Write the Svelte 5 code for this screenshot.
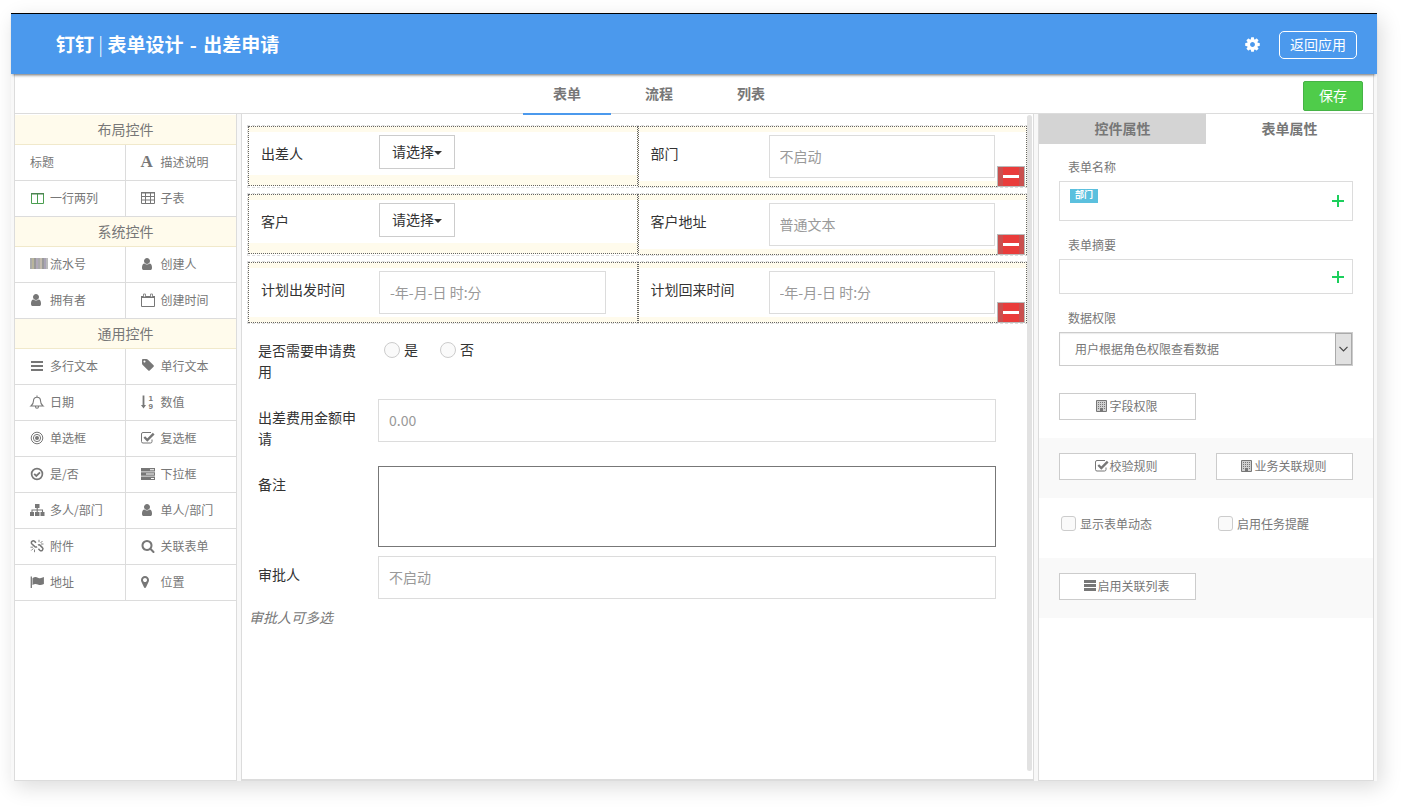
<script>
	// icon shapes are drawn on a 14 x 14 grid, the big ones are scaled down to it
	const big = (d) => `<path transform="scale(.0078125)" d="${d}"/>`;
	const line = (d, w = 1) => `<path d="${d}" fill="none" stroke="currentColor" stroke-width="${w}"/>`;

	const icons = {
		cog: big('M1152 896q0-106-75-181t-181-75-181 75-75 181 75 181 181 75 181-75 75-181zm512-109v222q0 12-8 23t-20 13l-185 28q-19 54-39 91 35 50 107 138 10 12 10 25t-9 23q-27 37-99 108t-94 71q-12 0-26-9l-138-108q-44 23-91 38-16 136-29 186-7 28-36 28h-222q-14 0-24.5-8.5t-11.5-21.5l-28-184q-49-16-90-37l-141 107q-10 9-25 9-14 0-25-11-126-114-165-168-7-10-7-23 0-12 8-23 15-21 51-66.5t54-70.5q-27-50-41-99l-183-27q-13-2-21-12.5t-8-23.5v-222q0-12 8-23t19-13l186-28q14-46 39-92-40-57-107-138-10-12-10-24 0-10 9-23 26-36 98.5-107.5t94.5-71.5q13 0 26 10l138 107q44-23 91-38 16-136 29-186 7-28 36-28h222q14 0 24.5 8.5t11.5 21.5l28 184q49 16 90 37l142-107q9-9 24-9 13 0 25 10 129 119 165 170 7 8 7 22 0 12-8 23-15 21-51 66.5t-54 70.5q26 50 41 98l183 28q13 2 21 12.5t8 23.5z'),
		user: `<g transform="translate(-1 0)">${big('M1536 1399q0 109-62.5 187t-150.5 78h-854q-88 0-150.5-78t-62.5-187q0-85 8.5-160.5t31.5-152 58.5-131 94-89 134.5-34.5q131 128 313 128t313-128q76 0 134.5 34.5t94 89 58.5 131 31.5 152 8.5 160.5zm-256-887q0 159-112.5 271.5t-271.5 112.5-271.5-112.5-112.5-271.5 112.5-271.5 271.5-112.5 271.5 112.5 112.5 271.5z')}</g>`,
		search: big('M1216 832q0-185-131.5-316.5t-316.5-131.5-316.5 131.5-131.5 316.5 131.5 316.5 316.5 131.5 316.5-131.5 131.5-316.5zm512 832q0 52-38 90t-90 38q-54 0-90-38l-343-342q-179 124-399 124-143 0-273.5-55.5t-225-150-150-225-55.5-273.5 55.5-273.5 150-225 225-150 273.5-55.5 273.5 55.5 225 150 150 225 55.5 273.5q0 220-124 399l343 343q37 37 37 90z'),
		marker: `<g transform="translate(-3 0)">${big('M1152 640q0-106-75-181t-181-75-181 75-75 181 75 181 181 75 181-75 75-181zm256 0q0 109-33 179l-364 774q-16 33-47.5 52t-67.5 19-67.5-19-46.5-52l-365-774q-33-70-33-179 0-212 150-362t362-150 362 150 150 362z')}</g>`,
		tag: `<g transform="translate(0 -1)">${big('M576 448q0-53-37.5-90.5t-90.5-37.5-90.5 37.5-37.5 90.5 37.5 90.5 90.5 37.5 90.5-37.5 37.5-90.5zm1067 576q0 53-37 90l-491 492q-39 37-91 37-53 0-90-37l-715-716q-38-37-64.5-101t-26.5-117v-416q0-52 38-90t90-38h416q53 0 117 26.5t102 64.5l715 714q37 39 37 91z')}</g>`,
		columns: '<path d="M1.500 2.500h12v10h-12z M7.500 2v11" fill="none" stroke="#4a9e50"/><path d="M1 2h13v1.500h-13z" fill="#4d8552"/>',
		table: line('M.5 1.500h13v11h-13z M.5 5.500h13 M.5 9h13 M4.500 2v10.500 M9.500 2v10.500') + '<path d="M0 1h14v1.500H0z"/>',
		calendar: line('M.5 3.500h13v10H.5z') + '<path d="M0 3h14v2H0z"/><path d="M2.500 1h2v3h-2z M9.500 1h2v3h-2z" fill="#fff" stroke="currentColor" stroke-width=".8"/>',
		bars: '<path d="M1 2h12v2H1z M1 6h12v2H1z M1 10h12v2H1z"/>',
		bell: line('M7 .5v1.500 M1 11c2-1.500 2.500-3.200 2.500-5.200 0-2.300 1.500-3.600 3.500-3.600s3.500 1.300 3.500 3.600c0 2 .5 3.700 2.500 5.200z M5.500 11.500c0 1 .6 1.800 1.500 1.800s1.500-.8 1.500-1.800', 1.1),
		sort: line('M2.500 0.500v11', 1.8) + '<path d="M0 10h5L2.500 13.500z"/><text x="7.500" y="6" font-family="Liberation Sans" font-weight="bold" font-size="8">1</text><text x="7.500" y="14" font-family="Liberation Sans" font-weight="bold" font-size="8">9</text>',
		target: '<g fill="none" stroke="currentColor"><circle cx="7" cy="7" r="5.800"/><circle cx="7" cy="7" r="3.600"/></g><circle cx="7" cy="7" r="2"/>',
		check: line('M11 8.500v2a1.500 1.500 0 0 1-1.500 1.500H2A1.500 1.500 0 0 1 .5 10.500v-7.500A1.500 1.500 0 0 1 2 1.500h8') + line('M3.300 6l3 3 6.400-6.400', 2.4),
		circlecheck: '<circle cx="7" cy="7" r="5.400" fill="none" stroke="currentColor" stroke-width="1.700"/>' + line('M4.200 6.900l2.100 2.100 3.700-3.700', 1.8),
		server: '<path d="M0 1h14v3.500H0z M0 5.300h14v3.500H0z M0 9.600h14v3.500H0z"/><path d="M9 2.200h4v1H9z M5 6.600h8v1H5z M10 10.900h3v1h-3z" fill="#fff"/>',
		sitemap: '<path d="M5 1h4.500v4H5z M0 9h4v4H0z M5 9h4.500v4H5z M10.500 9h4v4h-4z"/>' + line('M7.200 5v4 M2 9V7h10.500v2', 1.1),
		unlink: line('M6 3.800L4.600 2.400Q3.300 1.200 2 2.400T2 5L4.800 7.600Q6 8.500 7 7.600 M8 6.200q1.200-.8 2.200.2l2.200 2.200q1.200 1.300 0 2.600t-2.600 0L8.400 9.800', 1.5) + line('M9 0.800v2.400 M10.500 4l2-2 M11 5h2.500 M4.500 10.500v2.700 M3.300 9.500l-2 2 M.5 8.200H3', 0.9),
		flag: line('M1.300 1.500v11.500', 1.3) + '<path d="M2.500 3.200c2-1.600 3.800-1.300 5.400-.5 2 1 3.600.6 6-.6v6.900c-2.400 1.200-4 1.500-6 .5-1.600-.8-3.400-1-5.400.5z"/>',
		building: line('M1.500 1.500h10v11h-10z') + '<path d="M3 3h1v1H3z M5 3h1v1H5z M7 3h1v1H7z M9 3h1v1H9z M3 5h1v1H3z M5 5h1v1H5z M7 5h1v1H7z M9 5h1v1H9z M3 7h1v1H3z M5 7h1v1H5z M7 7h1v1H7z M9 7h1v1H9z M3 9h1v1H3z M9 9h1v1H9z M5 9h3v3H5z"/><path d="M2 2h9v10H2z" opacity=".35"/>',
		list: '<path d="M1 1h12v3H1z M1 5h12v3H1z M1 9h12v3H1z"/>',
		plus: line('M7 1v12 M1 7h12', 2)
	};

	// tints of the barcode stripes
	const stripes = ['#aaa', '#b9b59c', '#999', '#b0a9b8', '#aaa', '#c4bcae', '#9a9a9a', '#a9a3b5', '#bbb'];

	const groups = [
		{
			title: '布局控件',
			items: [
				{ name: '标题', icon: '' },
				{ name: '描述说明', icon: 'font' },
				{ name: '一行两列', icon: 'columns' },
				{ name: '子表', icon: 'table' }
			]
		},
		{
			title: '系统控件',
			items: [
				{ name: '流水号', icon: 'barcode' },
				{ name: '创建人', icon: 'user' },
				{ name: '拥有者', icon: 'user' },
				{ name: '创建时间', icon: 'calendar' }
			]
		},
		{
			title: '通用控件',
			items: [
				{ name: '多行文本', icon: 'bars' },
				{ name: '单行文本', icon: 'tag' },
				{ name: '日期', icon: 'bell' },
				{ name: '数值', icon: 'sort' },
				{ name: '单选框', icon: 'target' },
				{ name: '复选框', icon: 'check' },
				{ name: '是/否', icon: 'circlecheck' },
				{ name: '下拉框', icon: 'server' },
				{ name: '多人/部门', icon: 'sitemap' },
				{ name: '单人/部门', icon: 'user' },
				{ name: '附件', icon: 'unlink' },
				{ name: '关联表单', icon: 'search' },
				{ name: '地址', icon: 'flag' },
				{ name: '位置', icon: 'marker' }
			]
		}
	];

	const rows = [
		[
			{ id: 'traveller', label: '出差人', type: 'pick' },
			{ id: 'dept', label: '部门', hint: '不启动' }
		],
		[
			{ id: 'customer', label: '客户', type: 'pick' },
			{ id: 'address', label: '客户地址', hint: '普通文本' }
		],
		[
			{ id: 'leave', label: '计划出发时间', hint: '-年-月-日 时:分' },
			{ id: 'back', label: '计划回来时间', hint: '-年-月-日 时:分' }
		]
	];

	let tab = $state('表单');
	let side = $state('表单属性');
</script>

{#snippet icon(name)}
	<svg class="icon" viewBox="0 0 14 14" fill="currentColor" aria-hidden="true">{@html icons[name]}</svg>
{/snippet}

<div class="page">
	<div class="window">
		<header>
			<h1>钉钉 <span class="bar">|</span> 表单设计 <span class="dash">-</span> 出差申请</h1>
			<button class="gear" aria-label="设置">{@render icon('cog')}</button>
			<button class="back">返回应用</button>
		</header>

		<div class="toolbar">
			<nav>
				{#each ['表单', '流程', '列表'] as name}
					<button class:active={tab === name} onclick={() => (tab = name)}>{name}</button>
				{/each}
			</nav>
			<button class="save">保存</button>
		</div>

		<main>
			<aside class="palette">
				{#each groups as group}
					<h2>{group.title}</h2>
					<div class="items">
						{#each group.items as item}
							<button>
								{#if item.icon === 'font'}
									<span class="slot letter" aria-hidden="true">A</span>
								{:else if item.icon === 'barcode'}
									<span class="slot barcode">
										{#each stripes as color}<i style="background: {color}"></i>{/each}
									</span>
								{:else if item.icon}
									<span class="slot">{@render icon(item.icon)}</span>
								{/if}
								{item.name}
							</button>
						{/each}
					</div>
				{/each}
			</aside>

			<section class="canvas">
				{#each rows as row}
					<div class="pair">
						{#each row as field}
							<div class="cell">
								<div class="field">
									<label for={field.id}>{field.label}</label>
									{#if field.type === 'pick'}
										<button class="pick" id={field.id}>请选择<i class="caret"></i></button>
									{:else}
										<input id={field.id} type="text" placeholder={field.hint} />
									{/if}
								</div>
							</div>
						{/each}
						<button class="remove" aria-label="删除"><i></i></button>
					</div>
				{/each}

				<div class="rest">
					<div class="line">
						<span class="label" id="needFee">是否需要申请费用</span>
						<div class="radios" role="radiogroup" aria-labelledby="needFee">
							<label><input type="radio" name="fee" />是</label>
							<label><input type="radio" name="fee" />否</label>
						</div>
					</div>
					<div class="line">
						<label class="label" for="amount">出差费用金额申请</label>
						<input id="amount" type="text" placeholder="0.00" />
					</div>
					<div class="line">
						<label class="label" for="remark">备注</label>
						<textarea id="remark"></textarea>
					</div>
					<div class="line">
						<label class="label" for="approver">审批人</label>
						<input id="approver" type="text" placeholder="不启动" />
					</div>
				</div>
				<p class="note">审批人可多选</p>
				<div class="thumb"></div>
			</section>

			<aside class="props">
				<div class="tabs">
					{#each ['控件属性', '表单属性'] as name}
						<button class:active={side === name} onclick={() => (side = name)}>{name}</button>
					{/each}
				</div>
				<div class="block">
					<h3>表单名称</h3>
					<div class="box named">
						<span class="tagged">部门</span>
						<button class="add" aria-label="添加">{@render icon('plus')}</button>
					</div>
					<h3>表单摘要</h3>
					<div class="box">
						<button class="add" aria-label="添加">{@render icon('plus')}</button>
					</div>
					<label class="heading" for="scope">数据权限</label>
					<div class="select">
						<select id="scope">
							<option>用户根据角色权限查看数据</option>
						</select>
						<span class="drop">
							<svg viewBox="0 0 9 6" fill="none" stroke="#444" stroke-width="1.2"><path d="M.5.8l4 4 4-4" /></svg>
						</span>
					</div>
					<div class="duo">
						<button class="rule">{@render icon('building')}字段权限</button>
					</div>
				</div>
				<div class="strip grey duo">
					<button class="rule">{@render icon('check')}校验规则</button>
					<button class="rule">{@render icon('building')}业务关联规则</button>
				</div>
				<div class="strip duo">
					<label class="tick"><input type="checkbox" />显示表单动态</label>
					<label class="tick"><input type="checkbox" />启用任务提醒</label>
				</div>
				<div class="strip grey duo">
					<button class="rule">{@render icon('list')}启用关联列表</button>
				</div>
			</aside>
		</main>
	</div>
</div>

<style>
	:global(body) {
		background: #fff;
	}
	* {
		box-sizing: border-box;
		margin: 0;
		padding: 0;
	}
	.page {
		display: flex;
		min-height: 100vh;
		padding: 13px 29px 27px 11px;
		font-family: 'Noto Sans CJK SC', sans-serif;
		font-size: 14px;
		line-height: 21px;
		color: #777;
	}
	button,
	input,
	select,
	textarea {
		font: inherit;
		color: inherit;
		background: none;
		border: 0;
		border-radius: 0;
	}
	.icon {
		width: 14px;
		height: 14px;
		display: block;
		overflow: visible;
	}
	.window {
		flex: 1;
		display: flex;
		flex-direction: column;
		background: #f8f8f8;
		box-shadow: 4px 6px 20px rgba(0, 0, 0, 0.14);
	}

	header {
		display: flex;
		align-items: center;
		height: 61px;
		padding: 0 20px 0 45px;
		border-top: 1px solid #000;
		background: #4b99ed;
		color: #fff;
		position: relative;
		z-index: 2;
		box-shadow: 0 3px 3px -2px rgba(0, 0, 0, 0.6);
	}
	h1 {
		flex: 1;
		font-size: 19px;
		line-height: 28px;
	}
	.bar {
		font-weight: 300;
	}
	.dash {
		margin: 0 2px;
	}
	.gear {
		padding: 3px;
		margin-right: 15px;
	}
	.gear .icon {
		width: 17px;
		height: 17px;
	}
	.back {
		height: 28px;
		margin-top: 2px;
		padding: 0 10px 2px;
		border: 1px solid #fff;
		border-radius: 5px;
	}

	.toolbar {
		position: relative;
		z-index: 1;
		display: flex;
		align-items: center;
		height: 40px;
		margin: 0 3px;
		padding-right: 10px;
		border: 1px solid #dcdcdc;
		border-top: 0;
		background: #fff;
	}
	nav {
		flex: 1;
		display: flex;
		justify-content: center;
		gap: 4px;
		margin-top: 2px;
	}
	nav button {
		width: 88px;
		height: 41px;
		border-bottom: 2px solid transparent;
		font-weight: bold;
	}
	nav .active {
		border-color: #4b99ed;
	}
	.save {
		width: 60px;
		height: 30px;
		margin-top: 4px;
		border: 1px solid #46b346;
		border-radius: 2px;
		background: #4fcc4a;
		color: #fff;
	}

	main {
		flex: 1;
		display: grid;
		grid-template-columns: 223px 1fr 336px;
		gap: 4px;
		margin: 0 3px;
	}
	main > * {
		border: 1px solid #dcdcdc;
		border-top: 0;
		background: #fff;
	}

	.palette {
		padding-top: 1px;
	}
	h2 {
		height: 30px;
		border-bottom: 1px solid #f1e9cb;
		background: #fffbec;
		font-size: 14px;
		font-weight: normal;
		line-height: 29px;
		text-align: center;
	}
	.items {
		display: grid;
		grid-template-columns: 1fr 1fr;
	}
	.items button {
		display: flex;
		align-items: center;
		height: 36px;
		padding: 0 0 2px 15px;
		border-bottom: 1px solid #dcdcdc;
		font-size: 12px;
		white-space: nowrap;
	}
	.items button:nth-child(odd) {
		border-right: 1px solid #dcdcdc;
	}
	.slot {
		width: 20px;
	}
	.letter {
		font: bold 17px/20px 'Liberation Serif', serif;
		text-align: left;
	}
	.barcode {
		display: flex;
		height: 11px;
	}
	.barcode i {
		width: 2px;
	}

	.canvas {
		position: relative;
		padding: 11px 5px 0;
		border-bottom-width: 2px;
		color: #333;
	}
	.pair {
		position: relative;
		display: grid;
		grid-template-columns: 1fr 1fr;
		align-items: start;
		margin-bottom: 5px;
		border: 1px dashed #ddd;
	}
	.cell {
		padding: 5px 0;
		border: 1px dotted #666;
		background: #fffbec;
	}
	.field {
		display: grid;
		grid-template-columns: 118px 1fr;
		padding: 3px 31px 3px 12px;
		background: #fff;
	}
	.cell:has(.pick) {
		padding-bottom: 10px;
	}
	.cell:has(.pick) .field {
		padding-bottom: 6px;
	}
	.field label {
		padding-top: 8px;
	}
	.canvas input[type='text'] {
		width: 100%;
		height: 43px;
		padding: 0 10px 2px;
		border: 1px solid #dcdcdc;
		background: #fff;
	}
	.canvas input::placeholder {
		color: #999;
		opacity: 1;
	}
	.pick {
		display: flex;
		align-items: center;
		justify-self: start;
		height: 34px;
		padding: 0 12px 2px;
		border: 1px solid #ccc;
		background: #fff;
	}
	.caret {
		margin-top: 3px;
		border: 4px solid transparent;
		border-top-color: #333;
		border-bottom: 0;
	}
	.remove {
		position: absolute;
		right: 2px;
		bottom: 0;
		width: 28px;
		height: 21px;
		padding: 0 5px;
		border: 1px solid #bbb;
		background: #c9504f;
	}
	.remove i {
		display: block;
		height: 19px;
		border: solid #e93c3b;
		border-width: 8px 0;
		background: #fff;
	}
	.rest {
		padding: 3px 32px 0 11px;
	}
	.line {
		display: grid;
		grid-template-columns: 98px 1fr;
		column-gap: 22px;
		align-items: start;
	}
	.label {
		padding: 8px 0 17px;
	}
	.line > input,
	.line > textarea {
		margin-bottom: 9px;
	}
	textarea {
		display: block;
		width: 100%;
		height: 81px;
		padding: 10px;
		border: 1px solid #777;
		resize: none;
	}
	.radios {
		display: flex;
		gap: 22px;
		padding: 7px 6px;
	}
	.radios label,
	.tick {
		display: flex;
		align-items: center;
		gap: 4px;
	}
	input[type='radio'],
	input[type='checkbox'] {
		appearance: none;
		width: 16px;
		height: 16px;
		border: 1px solid #ccc;
		border-radius: 50%;
		background: #fafafa;
	}
	input[type='checkbox'] {
		width: 15px;
		height: 15px;
		border-radius: 3px;
	}
	.note {
		padding-left: 2px;
		font-style: italic;
		line-height: 18px;
		color: #777;
	}
	/* scroll thumb lying over the right edge of the form */
	.thumb {
		position: absolute;
		top: 1px;
		right: 1px;
		bottom: 8px;
		width: 5px;
		border-radius: 3px;
		background: #e2e2e2;
	}

	.props {
		font-size: 12px;
	}
	.tabs {
		display: flex;
	}
	.tabs button {
		flex: 1;
		height: 30px;
		padding-bottom: 2px;
		background: #d4d4d4;
		font-size: 14px;
		font-weight: bold;
	}
	.tabs .active {
		background: #fff;
	}
	.block {
		padding: 12px 20px 18px;
	}
	h3,
	.heading {
		display: block;
		padding-left: 9px;
		margin-bottom: 4px;
		font-size: 12px;
		font-weight: normal;
	}
	.box {
		display: flex;
		align-items: center;
		height: 35px;
		margin-bottom: 13px;
		padding: 0 7px 0 10px;
		border: 1px solid #dcdcdc;
	}
	.named {
		height: 40px;
	}
	.tagged {
		align-self: flex-start;
		height: 14px;
		margin-top: 7px;
		padding: 0 5px;
		background: #5bc0de;
		color: #fff;
		font-size: 9px;
		font-weight: bold;
		line-height: 12px;
	}
	.add {
		margin-left: auto;
		color: #1ccf5c;
	}
	.select {
		position: relative;
		margin-bottom: 27px;
	}
	select {
		appearance: none;
		display: block;
		width: 100%;
		height: 34px;
		padding: 0 30px 2px 15px;
		border: 1px solid #ccc;
		background: #fff;
		box-shadow: inset 0 1px 1px rgba(0, 0, 0, 0.08);
	}
	.drop {
		position: absolute;
		top: 1px;
		right: 1px;
		bottom: 1px;
		display: grid;
		place-items: center;
		width: 17px;
		border: 1px solid #aaa;
		background: #e1e1e1;
		pointer-events: none;
	}
	.drop svg {
		width: 9px;
		height: 6px;
	}
	.duo {
		display: grid;
		grid-template-columns: 1fr 1fr;
		column-gap: 20px;
	}
	.strip {
		height: 60px;
		padding: 15px 20px;
	}
	.grey {
		background: #f9f9f9;
	}
	.rule {
		display: flex;
		align-items: center;
		justify-content: center;
		height: 27px;
		padding: 0 2px 2px 0;
		border: 1px solid #ccc;
		background: #fff;
	}
	.tick {
		height: 21px;
		padding-left: 2px;
	}
</style>
